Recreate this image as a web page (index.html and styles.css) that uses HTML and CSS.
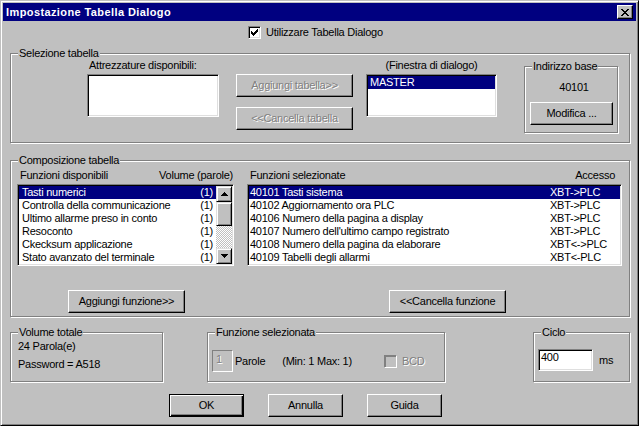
FILE: index.html
```html
<!DOCTYPE html>
<html>
<head>
<meta charset="utf-8">
<title>Impostazione Tabella Dialogo</title>
<link rel="stylesheet" href="styles.css">
</head>
<body>
<div class="window">
  <div class="titlebar">
    <span class="title">Impostazione Tabella Dialogo</span>
    <span class="close"><svg width="8" height="7" viewBox="0 0 8 7" shape-rendering="crispEdges"><path fill="#000" d="M0 0h2v1H0zM6 0h2v1H6zM1 1h2v1H1zM5 1h2v1H5zM2 2h4v1H2zM3 3h2v1H3zM2 4h4v1H2zM1 5h2v1H1zM5 5h2v1H5zM0 6h2v1H0zM6 6h2v1H6z"/></svg></span>
  </div>
  <div class="body">
    <div class="use-row">
      <span class="check"><svg width="7" height="7" viewBox="0 0 7 7" shape-rendering="crispEdges"><path fill="#000" d="M6 0h1v1H6zM5 1h2v1H5zM0 2h1v1H0zM4 2h3v1H4zM0 3h2v1H0zM3 3h3v1H3zM0 4h5v1H0zM1 5h3v1H1zM2 6h1v1H2z"/></svg></span>
      <span>Utilizzare Tabella Dialogo</span>
    </div>

    <div class="group g-sel">
      <span class="legend">Selezione tabella</span>
      <div class="sel-col sel-col1">
        <span class="lbl">Attrezzature disponibili:</span>
        <div class="field list1"></div>
      </div>
      <div class="sel-col2">
        <button class="btn dis">Aggiungi tabella&gt;&gt;</button>
        <button class="btn dis">&lt;&lt;Cancella tabella</button>
      </div>
      <div class="sel-col sel-col3">
        <span class="lbl">(Finestra di dialogo)</span>
        <div class="field list2">
          <div class="row sel">MASTER</div>
        </div>
      </div>
      <div class="group g-base">
        <span class="legend">Indirizzo base</span>
        <div class="base-val">40101</div>
        <button class="btn btn-mod">Modifica ...</button>
      </div>
    </div>

    <div class="group g-comp">
      <span class="legend">Composizione tabella</span>
      <div class="comp-top">
        <div class="comp-left">
          <div class="col-head"><span>Funzioni disponibili</span><span>Volume (parole)</span></div>
          <div class="field list-funcs">
            <div class="rows">
              <div class="row sel"><span>Tasti numerici</span><span>(1)</span></div>
              <div class="row"><span>Controlla della communicazione</span><span>(1)</span></div>
              <div class="row"><span>Ultimo allarme preso in conto</span><span>(1)</span></div>
              <div class="row"><span>Resoconto</span><span>(1)</span></div>
              <div class="row"><span>Ckecksum applicazione</span><span>(1)</span></div>
              <div class="row"><span>Stato avanzato del terminale</span><span>(1)</span></div>
            </div>
            <div class="vscroll">
              <div class="sb-btn"><svg width="7" height="4" viewBox="0 0 7 4" shape-rendering="crispEdges"><path fill="#000" d="M3 0h1v1H3zM2 1h3v1H2zM1 2h5v1H1zM0 3h7v1H0z"/></svg></div>
              <div class="sb-thumb"></div>
              <div class="sb-track"></div>
              <div class="sb-btn"><svg width="7" height="4" viewBox="0 0 7 4" shape-rendering="crispEdges"><path fill="#000" d="M0 0h7v1H0zM1 1h5v1H1zM2 2h3v1H2zM3 3h1v1H3z"/></svg></div>
            </div>
          </div>
        </div>
        <div class="comp-right">
          <div class="col-head"><span>Funzioni selezionate</span><span>Accesso</span></div>
          <div class="field list-sel">
            <div class="row sel"><span>40101 Tasti sistema</span><span>XBT-&gt;PLC</span></div>
            <div class="row"><span>40102 Aggiornamento ora PLC</span><span>XBT-&gt;PLC</span></div>
            <div class="row"><span>40106 Numero della pagina a display</span><span>XBT-&gt;PLC</span></div>
            <div class="row"><span>40107 Numero dell'ultimo campo registrato</span><span>XBT-&gt;PLC</span></div>
            <div class="row"><span>40108 Numero della pagina da elaborare</span><span>XBT&lt;-&gt;PLC</span></div>
            <div class="row"><span>40109 Tabelli degli allarmi</span><span>XBT&lt;-PLC</span></div>
          </div>
        </div>
      </div>
      <div class="comp-buttons">
        <button class="btn">Aggiungi funzione&gt;&gt;</button>
        <button class="btn">&lt;&lt;Cancella funzione</button>
      </div>
    </div>

    <div class="bottom-row">
      <div class="group g-vol">
        <span class="legend">Volume totale</span>
        <p>24 Parola(e)</p>
        <p class="second">Password = A518</p>
      </div>
      <div class="group g-fun">
        <span class="legend">Funzione selezionata</span>
        <div class="frow">
          <span class="edit-dis">1</span>
          <span class="t-parole">Parole</span>
          <span class="t-min">(Min: 1 Max: 1)</span>
          <span class="check dis"></span>
          <span class="t-bcd">BCD</span>
        </div>
      </div>
      <div class="group g-cic">
        <span class="legend">Ciclo</span>
        <div class="frow crow">
          <span class="field edit">400</span>
          <span class="t-ms">ms</span>
        </div>
      </div>
    </div>

    <div class="footer">
      <button class="btn btn-foot default">OK</button>
      <button class="btn btn-foot">Annulla</button>
      <button class="btn btn-foot">Guida</button>
    </div>
  </div>
</div>
</body>
</html>
```

FILE: styles.css
```css
* { box-sizing: border-box; }
html, body { margin: 0; padding: 0; }
body {
  width: 639px; height: 426px; overflow: hidden;
  background: #c0c0c0;
  font-family: "Liberation Sans", Arial, sans-serif;
  font-size: 11px; line-height: 13px; letter-spacing: -0.25px;
  color: #000;
}
.window {
  width: 639px; height: 426px; padding: 2px;
  border: 1px solid; border-color: #c0c0c0 #000 #000 #c0c0c0;
  box-shadow: inset 1px 1px #fff, inset -1px -1px #808080;
  display: flex; flex-direction: column;
}
.titlebar {
  flex: none; height: 18px; background: #000080; color: #fff;
  display: flex; align-items: center; justify-content: space-between;
  padding: 0 3px 0 3px;
}
.title { font-weight: bold; letter-spacing: 0.4px; }
.close {
  width: 16px; height: 14px; background: #c0c0c0;
  border: 1px solid; border-color: #fff #000 #000 #fff;
  box-shadow: inset -1px -1px #808080;
  display: flex; align-items: center; justify-content: center;
}
svg { display: block; }
.body { display: flex; flex-direction: column; padding-left: 7px; }

.use-row { display: flex; align-items: center; gap: 5px; height: 13px; margin: 5px 0 0 238px; }
.check {
  flex: none; width: 13px; height: 13px; background: #fff;
  border: 1px solid; border-color: #808080 #fff #fff #808080;
  box-shadow: inset 1px 1px #000, inset -1px -1px #dfdfdf;
  display: flex; align-items: center; justify-content: center;
}
.check.dis { background: #c0c0c0; box-shadow: inset 1px 1px #808080; border-color: #808080 #fff #fff #808080; }

.group {
  position: relative; flex: none;
  border: 1px solid #808080;
  box-shadow: inset 1px 1px #fff, 1px 1px #fff;
}
.legend {
  position: absolute; top: -7px; left: 7px; padding: 0 1px;
  background: #c0c0c0; white-space: nowrap; line-height: 13px;
}

.field {
  background: #fff; padding: 1px;
  border: 1px solid; border-color: #808080 #fff #fff #808080;
  box-shadow: inset 1px 1px #000, inset -1px -1px #dfdfdf;
}
.row { height: 13px; white-space: nowrap; }
.row.sel { background: #000080; color: #fff; }

.btn {
  font: inherit; letter-spacing: inherit; line-height: 13px; color: #000;
  background: #c0c0c0; padding: 0; margin: 0;
  width: 117px; height: 23px;
  border: 1px solid; border-color: #fff #000 #000 #fff;
  box-shadow: inset -1px -1px #808080;
  display: flex; align-items: center; justify-content: center;
}
.btn.dis { color: #808080; text-shadow: 1px 1px 0 #fff; }
.btn.default {
  border: 1px solid #000;
  box-shadow: inset 1px 1px #fff, inset -1px -1px #000, inset -2px -2px #808080;
}

/* Selezione tabella */
.g-sel { width: 620px; height: 90px; margin-top: 14px; display: flex; align-items: flex-start; padding-left: 76px; }
.sel-col { padding-top: 5px; }
.lbl { display: block; height: 13px; margin-bottom: 2px; white-space: nowrap; }
.sel-col1 .lbl { padding-left: 2px; }
.list1 { width: 132px; height: 43px; }
.sel-col2 { margin: 20px 0 0 17px; display: flex; flex-direction: column; gap: 10px; }
.sel-col3 { margin-left: 13px; width: 131px; text-align: center; }
.list2 { width: 131px; height: 43px; text-align: left; }
.list2 .row { padding-left: 2px; }
.g-base { margin: 12px 0 0 27px; width: 94px; height: 67px; }
.base-val { padding: 14px 0 0 6px; text-align: center; height: 27px; }
.btn-mod { width: 83px; margin: 8px 0 0 5px; }

/* Composizione tabella */
.g-comp { width: 620px; height: 157px; margin-top: 17px; }
.comp-top { display: flex; padding: 8px 0 0 6px; }
.comp-left { width: 217px; }
.col-head { display: flex; justify-content: space-between; height: 13px; margin-bottom: 2px; white-space: nowrap; }
.comp-left .col-head { padding: 0 1px 0 3px; }
.comp-right { width: 375px; margin-left: 13px; }
.comp-right .col-head { padding: 0 7px 0 3px; }
.list-funcs { height: 82px; display: flex; }
.rows { flex: 1; }
.list-funcs .row { display: flex; justify-content: space-between; padding: 0 3px; }
.vscroll { width: 16px; flex: none; display: flex; flex-direction: column; }
.sb-btn, .sb-thumb {
  flex: none; background: #c0c0c0;
  border: 1px solid; border-color: #dfdfdf #000 #000 #dfdfdf;
  box-shadow: inset 1px 1px #fff, inset -1px -1px #808080;
}
.sb-btn { height: 16px; display: flex; align-items: center; justify-content: center; }
.sb-thumb { height: 24px; }
.sb-track { flex: 1; background: repeating-conic-gradient(#c0c0c0 0 25%, #fff 0 50%) 0 0 / 2px 2px; }
.list-sel { height: 82px; }
.list-sel .row { display: grid; grid-template-columns: 300px 1fr; padding-left: 1px; }
.comp-buttons { display: flex; margin-top: 24px; padding-left: 57px; }
.comp-buttons .btn + .btn { margin-left: 204px; }

/* bottom groups */
.bottom-row { display: flex; margin-top: 15px; }
.g-vol { width: 153px; height: 50px; padding: 7px 0 0 7px; }
.g-vol p { margin: 0; white-space: nowrap; }
.g-vol p.second { margin-top: 5px; }
.g-fun { width: 238px; height: 50px; margin-left: 44px; padding: 17px 0 0 4px; }
.frow { display: flex; align-items: center; height: 22px; white-space: nowrap; }
.edit-dis {
  width: 21px; height: 22px; padding: 2px 0 0 3px;
  border: 1px solid; border-color: #808080 #fff #fff #808080;
  color: #808080; text-shadow: 1px 1px 0 #fff;
}
.t-parole { margin-left: 2px; }
.t-min { margin-left: 17px; }
.g-fun .check { margin-left: 32px; }
.t-bcd { margin-left: 5px; color: #808080; text-shadow: 1px 1px 0 #fff; }
.g-cic { width: 97px; height: 50px; margin-left: 88px; padding: 16px 0 0 4px; }
.edit { width: 55px; height: 22px; padding: 1px 2px 0 2px; }
.t-ms { margin-left: 6px; }

.footer { display: flex; gap: 24px; margin: 12px 0 0 159px; }
.btn-foot { width: 75px; }
```
